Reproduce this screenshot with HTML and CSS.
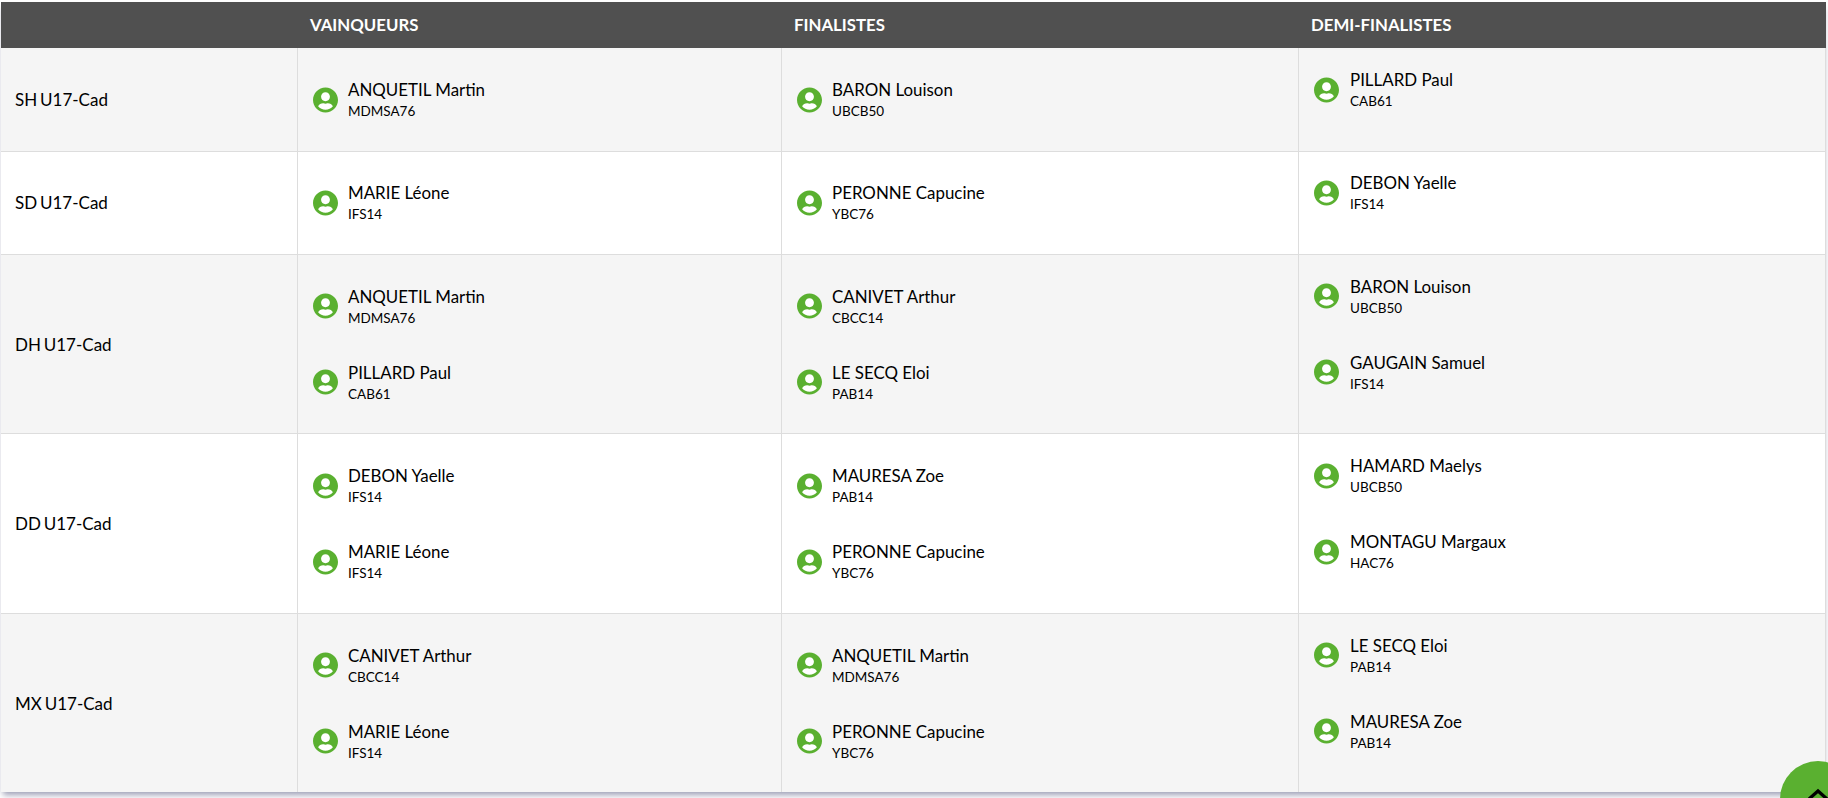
FILE: index.html
```html
<!DOCTYPE html>
<html lang="fr">
<head>
<meta charset="utf-8">
<title>Palmarès U17-Cad</title>
<link rel="stylesheet" href="styles.css">
</head>
<body>
<svg class="defs" width="0" height="0" aria-hidden="true">
  <symbol id="user" viewBox="0 0 496 512">
    <circle cx="248" cy="256" r="240" fill="#fff"/>
    <path fill="#5ab030" d="M248 8C111 8 0 119 0 256s111 248 248 248 248-111 248-248S385 8 248 8zm0 96c48.6 0 88 39.4 88 88s-39.4 88-88 88-88-39.4-88-88 39.4-88 88-88zm0 344c-58.7 0-111.3-26.6-146.5-68.2 18.8-35.4 55.6-59.8 98.5-59.8 2.4 0 4.8.4 7.1 1.1 13 4.2 26.6 6.9 40.9 6.9 14.3 0 28-2.7 40.9-6.9 2.3-.7 4.7-1.1 7.1-1.1 42.9 0 79.7 24.4 98.5 59.8C359.3 421.4 306.7 448 248 448z"/>
  </symbol>
</svg>
<main class="page">
<table class="results">
  <colgroup><col class="c-cat"><col class="c-win"><col class="c-fin"><col></colgroup>
  <thead>
    <tr><th></th><th>VAINQUEURS</th><th>FINALISTES</th><th>DEMI-FINALISTES</th></tr>
  </thead>
  <tbody>
    <tr>
      <td class="cat">SH U17-Cad</td>
      <td><div class="players">
        <div class="player"><svg class="avatar"><use href="#user"/></svg><div class="info"><div class="name">ANQUETIL Martin</div><div class="club">MDMSA76</div></div></div>
      </div></td>
      <td><div class="players">
        <div class="player"><svg class="avatar"><use href="#user"/></svg><div class="info"><div class="name">BARON Louison</div><div class="club">UBCB50</div></div></div>
      </div></td>
      <td><div class="players semi">
        <div class="player"><svg class="avatar"><use href="#user"/></svg><div class="info"><div class="name">PILLARD Paul</div><div class="club">CAB61</div></div></div>
      </div></td>
    </tr>
    <tr>
      <td class="cat">SD U17-Cad</td>
      <td><div class="players">
        <div class="player"><svg class="avatar"><use href="#user"/></svg><div class="info"><div class="name">MARIE Léone</div><div class="club">IFS14</div></div></div>
      </div></td>
      <td><div class="players">
        <div class="player"><svg class="avatar"><use href="#user"/></svg><div class="info"><div class="name">PERONNE Capucine</div><div class="club">YBC76</div></div></div>
      </div></td>
      <td><div class="players semi">
        <div class="player"><svg class="avatar"><use href="#user"/></svg><div class="info"><div class="name">DEBON Yaelle</div><div class="club">IFS14</div></div></div>
      </div></td>
    </tr>
    <tr>
      <td class="cat">DH U17-Cad</td>
      <td><div class="players">
        <div class="player"><svg class="avatar"><use href="#user"/></svg><div class="info"><div class="name">ANQUETIL Martin</div><div class="club">MDMSA76</div></div></div>
        <div class="player"><svg class="avatar"><use href="#user"/></svg><div class="info"><div class="name">PILLARD Paul</div><div class="club">CAB61</div></div></div>
      </div></td>
      <td><div class="players">
        <div class="player"><svg class="avatar"><use href="#user"/></svg><div class="info"><div class="name">CANIVET Arthur</div><div class="club">CBCC14</div></div></div>
        <div class="player"><svg class="avatar"><use href="#user"/></svg><div class="info"><div class="name">LE SECQ Eloi</div><div class="club">PAB14</div></div></div>
      </div></td>
      <td><div class="players semi">
        <div class="player"><svg class="avatar"><use href="#user"/></svg><div class="info"><div class="name">BARON Louison</div><div class="club">UBCB50</div></div></div>
        <div class="player"><svg class="avatar"><use href="#user"/></svg><div class="info"><div class="name">GAUGAIN Samuel</div><div class="club">IFS14</div></div></div>
      </div></td>
    </tr>
    <tr>
      <td class="cat">DD U17-Cad</td>
      <td><div class="players">
        <div class="player"><svg class="avatar"><use href="#user"/></svg><div class="info"><div class="name">DEBON Yaelle</div><div class="club">IFS14</div></div></div>
        <div class="player"><svg class="avatar"><use href="#user"/></svg><div class="info"><div class="name">MARIE Léone</div><div class="club">IFS14</div></div></div>
      </div></td>
      <td><div class="players">
        <div class="player"><svg class="avatar"><use href="#user"/></svg><div class="info"><div class="name">MAURESA Zoe</div><div class="club">PAB14</div></div></div>
        <div class="player"><svg class="avatar"><use href="#user"/></svg><div class="info"><div class="name">PERONNE Capucine</div><div class="club">YBC76</div></div></div>
      </div></td>
      <td><div class="players semi">
        <div class="player"><svg class="avatar"><use href="#user"/></svg><div class="info"><div class="name">HAMARD Maelys</div><div class="club">UBCB50</div></div></div>
        <div class="player"><svg class="avatar"><use href="#user"/></svg><div class="info"><div class="name">MONTAGU Margaux</div><div class="club">HAC76</div></div></div>
      </div></td>
    </tr>
    <tr>
      <td class="cat">MX U17-Cad</td>
      <td><div class="players">
        <div class="player"><svg class="avatar"><use href="#user"/></svg><div class="info"><div class="name">CANIVET Arthur</div><div class="club">CBCC14</div></div></div>
        <div class="player"><svg class="avatar"><use href="#user"/></svg><div class="info"><div class="name">MARIE Léone</div><div class="club">IFS14</div></div></div>
      </div></td>
      <td><div class="players">
        <div class="player"><svg class="avatar"><use href="#user"/></svg><div class="info"><div class="name">ANQUETIL Martin</div><div class="club">MDMSA76</div></div></div>
        <div class="player"><svg class="avatar"><use href="#user"/></svg><div class="info"><div class="name">PERONNE Capucine</div><div class="club">YBC76</div></div></div>
      </div></td>
      <td><div class="players semi">
        <div class="player"><svg class="avatar"><use href="#user"/></svg><div class="info"><div class="name">LE SECQ Eloi</div><div class="club">PAB14</div></div></div>
        <div class="player"><svg class="avatar"><use href="#user"/></svg><div class="info"><div class="name">MAURESA Zoe</div><div class="club">PAB14</div></div></div>
      </div></td>
    </tr>
  </tbody>
</table>
</main>
<a class="to-top" href="#" aria-label="Haut de page">
  <svg width="24" height="14" viewBox="0 0 24 14"><path d="M3 12 L12 4 L21 12" fill="none" stroke="#000" stroke-width="3.2"/></svg>
</a>
</body>
</html>
```

FILE: styles.css
```css
html, body {
  margin: 0;
  height: 100%;
  overflow: hidden;
  background: #fff;
}
body {
  font-family: Lato, "Liberation Sans", sans-serif;
  color: #000;
}
.defs { position: absolute; }
.page { padding: 2px 2px 0 1px; }
.results {
  width: 100%;
  border-collapse: separate;
  border-spacing: 0;
  table-layout: fixed;
  box-shadow: 0 5px 6px -2px rgba(60, 64, 110, .5);
}
.c-cat { width: 296px; }
.c-win { width: 484px; }
.c-fin { width: 517px; }
.results th {
  height: 46.4px;
  padding: 0 13px 2px;
  background: #505050;
  color: #fff;
  font-size: 16.8px;
  font-weight: 700;
  text-align: left;
  box-sizing: border-box;
}
.results td {
  padding: 13.05px 14px 13.05px 15px;
  border: 1px solid #ddd;
  border-width: 0 0 1px 1px;
  vertical-align: middle;
}
.results td:first-child { border-left: 0; }
.results td:last-child { border-right: 1px solid #ddd; }
.results tbody tr:last-child td { border-bottom: 0; }
.results tbody tr:nth-child(odd) td { background: #f5f5f5; }
.results td.cat { padding-left: 14px; font-size: 17px; word-spacing: -1.5px; }
.players { display: flex; flex-direction: column; gap: 20px; }
.player { display: flex; align-items: center; gap: 10px; height: 56.2px; }
.players.semi { padding-bottom: 20px; }
.players.semi .player { gap: 11px; }
.avatar { width: 25px; height: 26px; flex: none; }
.name { font-size: 16.9px; line-height: 24px; }
.club { font-size: 13.5px; line-height: 19px; }
.to-top {
  position: fixed;
  left: 1780px;
  top: 761px;
  width: 76px;
  height: 76px;
  border-radius: 50%;
  background: #5ab030;
  display: flex;
  justify-content: center;
  padding-top: 26px;
  box-sizing: border-box;
}
.to-top svg { display: block; }
```
